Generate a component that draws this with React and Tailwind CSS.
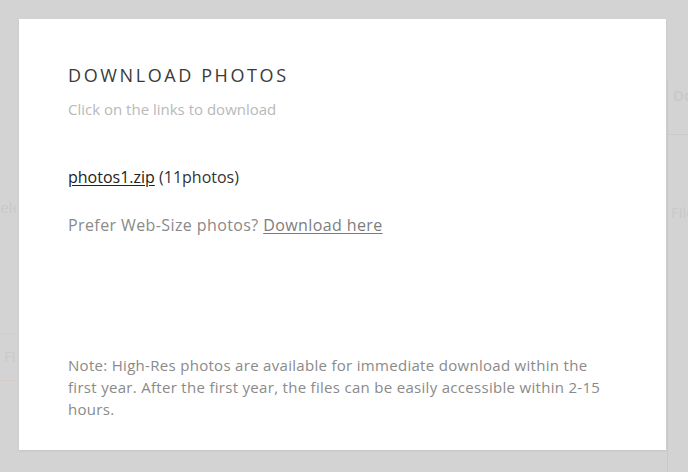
import React from 'react';

const font = { fontFamily: '"Open Sans", "Noto Sans", sans-serif' };

const Backdrop = () => (
  <div className="flex h-[472px] w-[688px] overflow-hidden bg-[#d3d3d3] text-[#c9c9c9]" style={font}>
    <div className="flex w-[16px] shrink-0 flex-col overflow-hidden">
      <div className="mt-[196px] -ml-[8px] whitespace-nowrap text-[15px]">Select</div>
      <div className="mt-[114px] flex h-[48px] items-center border-y border-[#d9c9c9] pl-[4px] text-[15px] whitespace-nowrap">
        Fi
      </div>
    </div>
    <div className="flex-1" />
    <div className="mt-[80px] flex w-[21px] shrink-0 flex-col overflow-hidden border-l border-[#c9c9c9]">
      <div className="flex h-[55px] items-start border-b border-[#cbcbcb] pt-[4px] pl-[5px] text-[15px] font-semibold whitespace-nowrap">
        Download
      </div>
      <div className="mt-[66px] pl-[3px] text-[15px] whitespace-nowrap">Files</div>
    </div>
  </div>
);

export default function App() {
  return (
    <div className="relative h-[472px] w-[688px] overflow-hidden">
      <Backdrop />
      <div
        className="absolute left-[19px] top-[19px] flex h-[431px] w-[647px] flex-col bg-white px-[49px] pt-[42px] shadow-[0_1px_2px_rgba(0,0,0,0.08)]"
        style={font}
      >
        <h2 className="text-[18px] leading-[28px] tracking-[2.6px] text-[#3a3a3a]">DOWNLOAD PHOTOS</h2>
        <p className="mt-[9px] text-[15px] leading-[22px] text-[#b9b9b9]">Click on the links to download</p>

        <p className="mt-[45px] text-[16px] leading-[24px] text-[#333]">
          <a className="text-[#222] underline underline-offset-2" href="#">photos1.zip</a> (11photos)
        </p>
        <p className="mt-[24px] text-[16px] leading-[24px] tracking-[0.4px] text-[#8a8a8a]">
          Prefer Web-Size photos? <a className="text-[#7d7d7d] underline underline-offset-2" href="#">Download here</a>
        </p>

        <p className="mt-auto mb-[30px] text-[15px] leading-[22px] tracking-[0.3px] text-[#8a8a8a]">
          Note: High-Res photos are available for immediate download within the first year. After the first year, the files can be easily accessible within 2-15 hours.
        </p>
      </div>
    </div>
  );
}
